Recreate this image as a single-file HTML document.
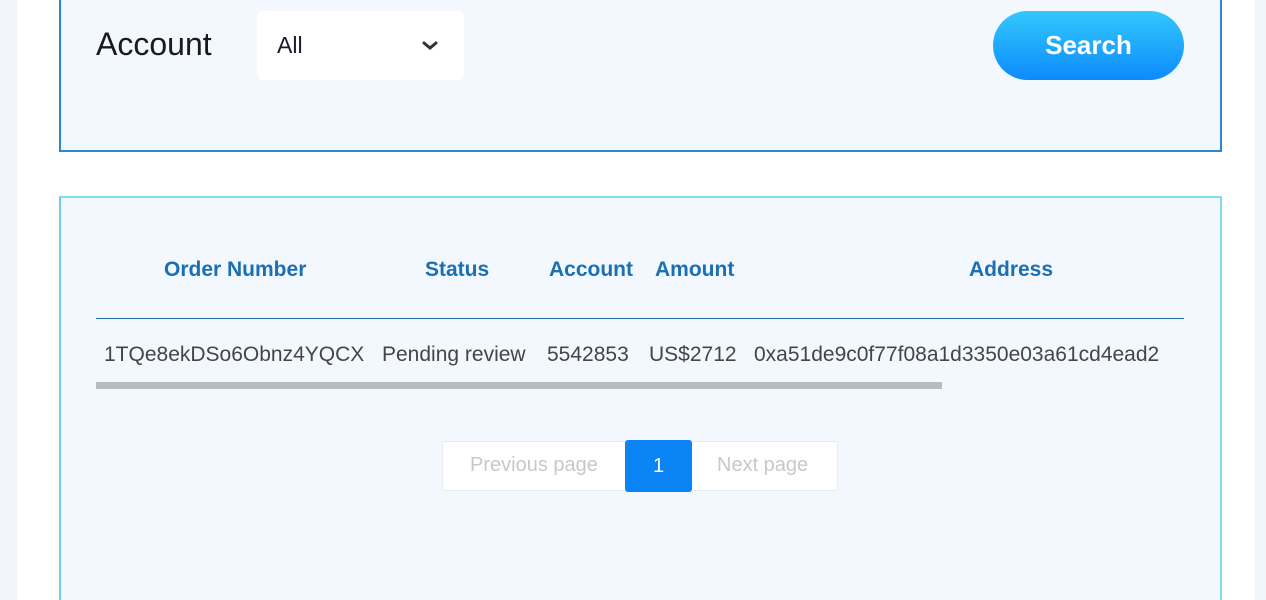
<!DOCTYPE html>
<html><head><style>
*{margin:0;padding:0;box-sizing:border-box}
html,body{width:1266px;height:600px;overflow:hidden}
body{background:#f2f6fc;position:relative;font-family:"Liberation Sans",sans-serif}
.wrap{position:absolute;left:17px;top:0;width:1238px;height:600px;background:#fff}
.box1{position:absolute;left:59px;top:-10px;width:1163px;height:162px;border:2px solid #2b86d4;background:#f3f8fe}
.box2{position:absolute;left:59px;top:196px;width:1163px;height:404px;border:2px solid #7fdcef;border-bottom:none;border-left-color:#6fcbef;background:#f3f8fe}
.a{position:absolute;white-space:nowrap}
.h{font-weight:bold;color:#1b6fb4;font-size:21px;top:258px}
.d{color:#454545;font-size:21px;top:344px}
</style></head><body>
<div class="wrap"></div>
<div class="box1"></div>
<div class="box2"></div>
<div class="a" style="left:96px;top:26px;font-size:32px;color:#1a1a1a">Account</div>
<div class="a" style="left:257px;top:11px;width:207px;height:69px;background:#fff;border-radius:6px"></div>
<div class="a" style="left:277px;top:32px;font-size:23px;color:#1a1a2a">All</div>
<svg class="a" style="left:421px;top:40px" width="18" height="12" viewBox="0 0 18 12"><path d="M3 3 L9 8 L15 3" stroke="#333" stroke-width="3" fill="none" stroke-linecap="round"/></svg>
<div class="a" style="left:993px;top:11px;width:191px;height:69px;border-radius:35px;background:linear-gradient(#33c8fd,#0d8bfb);color:#fff;font-size:26px;font-weight:bold;text-align:center;line-height:69px">Search</div>
<div class="a h" style="left:164px">Order Number</div>
<div class="a h" style="left:425px">Status</div>
<div class="a h" style="left:549px">Account</div>
<div class="a h" style="left:655px">Amount</div>
<div class="a h" style="left:969px">Address</div>
<div class="a" style="left:96px;top:318px;width:1088px;height:1px;background:#1d6fa8"></div>
<div class="a" style="left:96px;top:330px;width:1088px;height:50px;overflow:hidden">
<div class="a d" style="left:8px;top:13px">1TQe8ekDSo6Obnz4YQCX</div>
<div class="a d" style="left:286px;top:13px">Pending review</div>
<div class="a d" style="left:451px;top:13px">5542853</div>
<div class="a d" style="left:553px;top:13px">US$2712</div>
<div class="a d" style="left:658px;top:13px">0xa51de9c0f77f08a1d3350e03a61cd4ead2</div>
</div>
<div class="a" style="left:96px;top:382px;width:846px;height:7px;background:#b8bbbf"></div>
<div class="a" style="left:442px;top:441px;width:396px;height:50px;background:#fff;border:1px solid #e8ecf0;border-radius:3px"></div>
<div class="a" style="left:470px;top:454px;font-size:20px;color:#c8c8c8">Previous page</div>
<div class="a" style="left:625px;top:440px;width:67px;height:52px;background:#0b84f6;border-radius:3px;color:#fff;font-size:20px;text-align:center;line-height:52px">1</div>
<div class="a" style="left:717px;top:454px;font-size:20px;color:#c8c8c8">Next page</div>
</body></html>
